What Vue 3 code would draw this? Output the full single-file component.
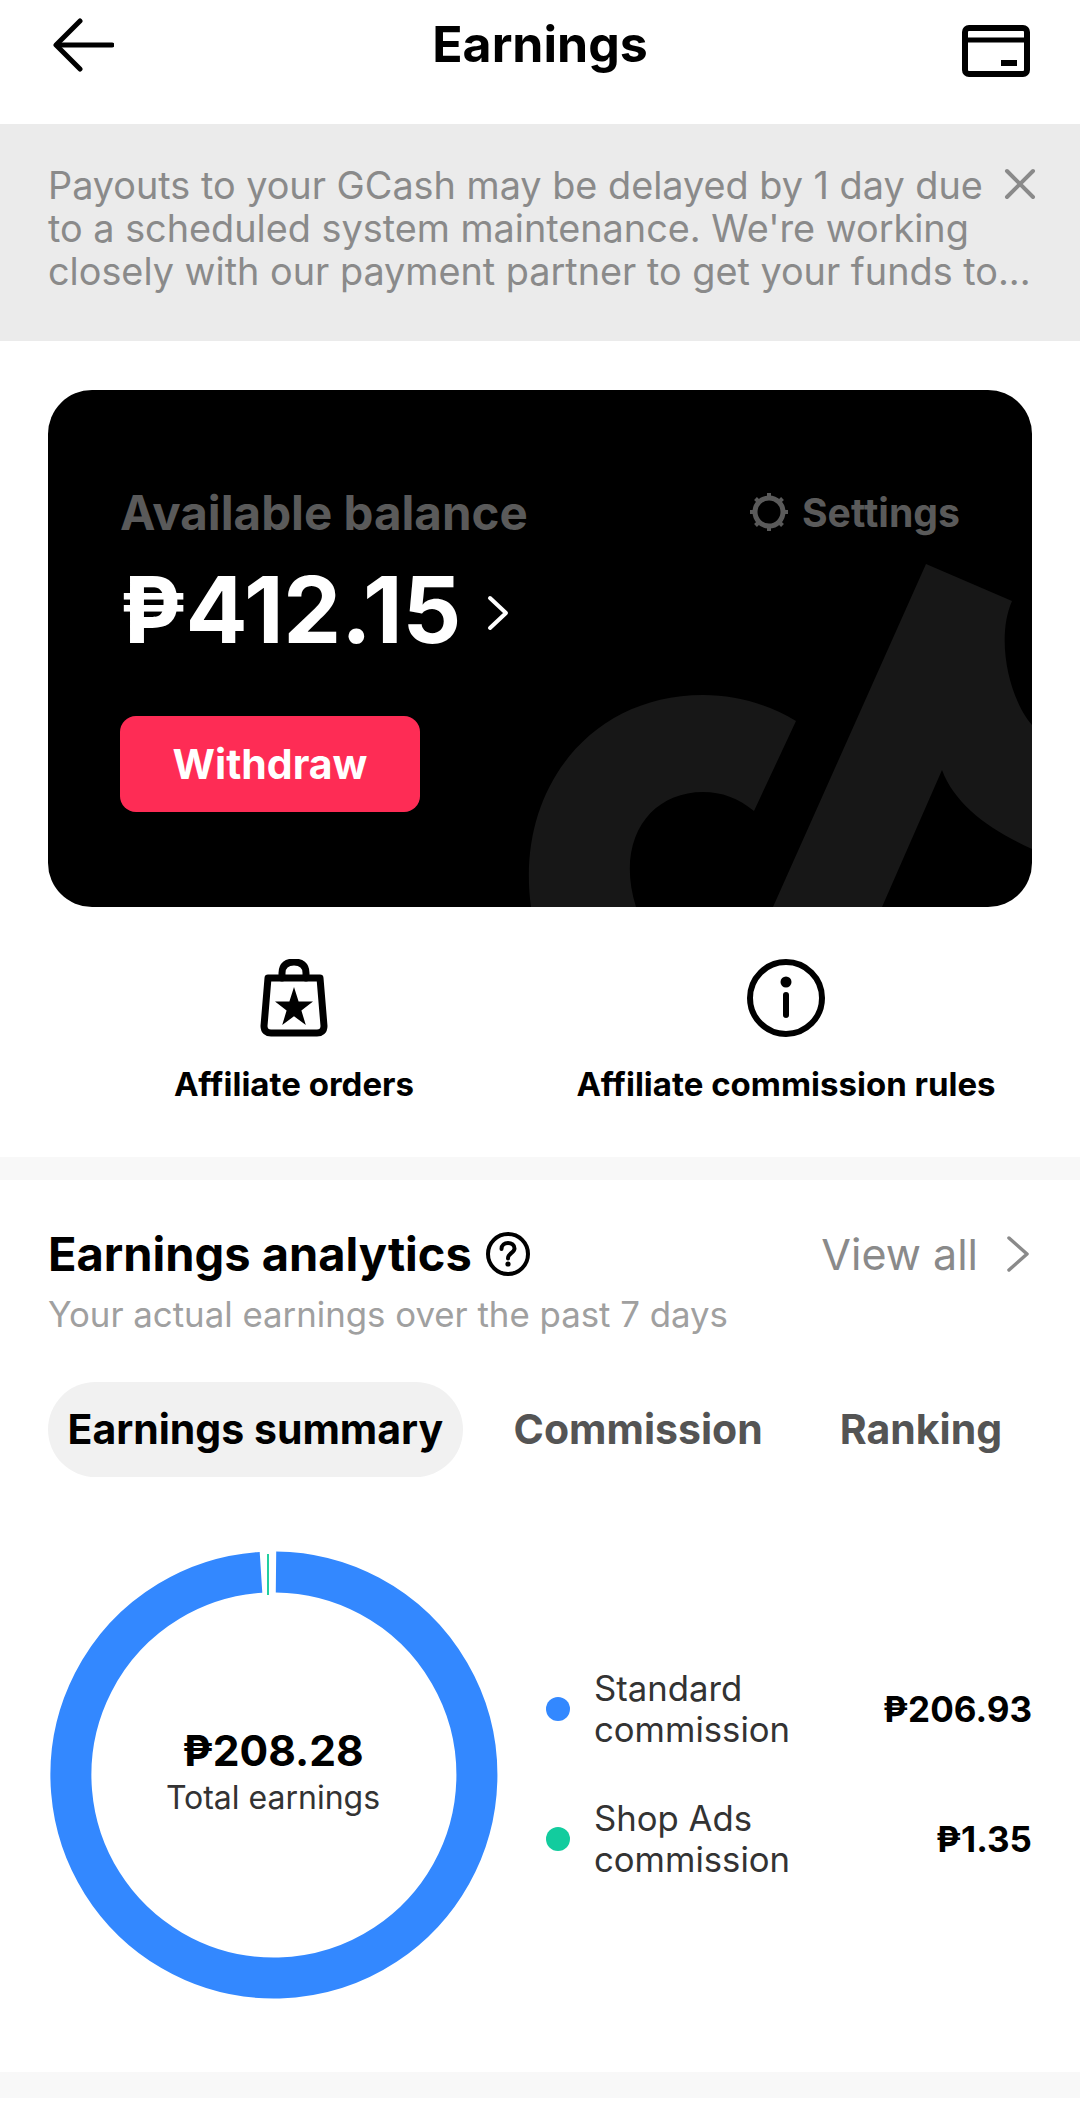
<template>
  <div class="page">
    <header class="topbar">
      <svg class="back" viewBox="0 0 62 54" fill="none" stroke="#000" stroke-width="5" stroke-linecap="round" stroke-linejoin="round">
        <path d="M28 3 L4 27 L28 51" />
        <path d="M5 27 H60" />
      </svg>
      <h1 class="title">Earnings</h1>
      <svg class="wallet" viewBox="0 0 68 52" fill="none">
        <rect x="3" y="3" width="62" height="46" rx="4" stroke="#000" stroke-width="6" />
        <path d="M3 15 H65" stroke="#000" stroke-width="5" />
        <rect x="39" y="35" width="16" height="6" fill="#000" />
      </svg>
    </header>

    <section class="notice">
      <p v-for="line in noticeLines" :key="line">{{ line }}</p>
      <svg class="notice-close" viewBox="0 0 32 32" fill="none" stroke="#8a8a8a" stroke-width="4" stroke-linecap="round">
        <path d="M3 3 L29 29 M29 3 L3 29" />
      </svg>
    </section>

    <section class="balance-wrap">
      <div class="balance-card">
        <svg class="logo" viewBox="48 390 984 517" preserveAspectRatio="none" fill="#171717">
          <path d="M531 907 C515 790 590 695 703 695 C736 695 768 704 796 721 L754 811 C738 798 722 792 703 792 C650 792 615 840 636 907 Z" />
          <path d="M926 564 L1012 601 C995 640 1010 700 1032 725 L1032 849 C990 830 955 805 942 770 L882 907 L773 907 Z" />
        </svg>
        <div class="balance-top">
          <span class="balance-label">Available balance</span>
          <span class="settings">
            <svg class="gear" viewBox="0 0 40 40" fill="none" stroke="#5a5a5a" stroke-width="5">
              <circle cx="20" cy="20" r="14" />
              <path d="M20 1 V6 M20 34 V39 M1 20 H6 M34 20 H39 M6.5 6.5 L10 10 M30 30 L33.5 33.5 M33.5 6.5 L30 10 M10 30 L6.5 33.5" stroke-width="4" />
            </svg>
            Settings
          </span>
        </div>
        <div class="amount-row">
          <span class="amount">₱412.15</span>
          <svg class="amount-chevron" viewBox="0 0 22 36" fill="none" stroke="#fff" stroke-width="4" stroke-linecap="round" stroke-linejoin="round">
            <path d="M3 3 L19 18 L3 33" />
          </svg>
        </div>
        <button class="withdraw">Withdraw</button>
      </div>

      <div class="shortcuts">
        <div class="shortcut">
          <svg class="shortcut-icon" viewBox="0 0 78 78" fill="none" stroke="#000" stroke-width="7" stroke-linejoin="round">
            <path d="M27 19 V14 C27 6 32 3 39 3 C46 3 51 6 51 14 V19" stroke-linecap="round" />
            <path d="M13 19 H65 L69 67 C69 72 66 74 62 74 H16 C12 74 9 72 9 67 Z" />
            <path fill="#000" stroke="none" d="M39 28 L43.6 42.6 H58 L46.4 51.6 L50.8 66 L39 57.2 L27.2 66 L31.6 51.6 L20 42.6 H34.4 Z" />
          </svg>
          <span>Affiliate orders</span>
        </div>
        <div class="shortcut">
          <svg class="shortcut-icon" viewBox="0 0 78 78" fill="none" stroke="#000" stroke-width="6">
            <circle cx="39" cy="39" r="36" />
            <circle cx="39" cy="23" r="5.5" fill="#000" stroke="none" />
            <path d="M39 36 V56" stroke-linecap="round" />
          </svg>
          <span>Affiliate commission rules</span>
        </div>
      </div>
    </section>

    <div class="divider"></div>

    <section class="analytics">
      <div class="analytics-head">
        <h2>Earnings analytics</h2>
        <svg class="help" viewBox="0 0 44 44" fill="none" stroke="#000" stroke-width="4">
          <circle cx="22" cy="22" r="20" />
          <path d="M15.5 17 C15.5 13 18.5 11 22 11 C25.5 11 28.5 13 28.5 16.5 C28.5 21 22 21 22 26.5" stroke-linecap="round" />
          <circle cx="22" cy="32" r="2.6" fill="#000" stroke="none" />
        </svg>
        <span class="view-all">View all</span>
        <svg class="view-chevron" viewBox="0 0 24 36" fill="none" stroke="#8a8a8a" stroke-width="3.5" stroke-linecap="round" stroke-linejoin="round">
          <path d="M3 2 L21 18 L3 34" />
        </svg>
      </div>
      <p class="analytics-sub">Your actual earnings over the past 7 days</p>

      <div class="tabs">
        <span v-for="(tab, i) in tabs" :key="tab" class="tab" :class="{ active: i === 0 }">{{ tab }}</span>
      </div>

      <div class="chart-row">
        <div class="donut">
          <svg viewBox="0 0 446 446" width="446" height="446" fill="none" stroke-width="41">
            <path d="M 226 20 A 203 203 0 1 1 211 20.4" stroke="#3388ff" />
            <path d="M 218 2 V 43" stroke="#22cfa0" stroke-width="2" />
          </svg>
          <div class="donut-center">
            <strong>₱208.28</strong>
            <span>Total earnings</span>
          </div>
        </div>
        <ul class="legend">
          <li v-for="item in legend" :key="item.amount">
            <i class="dot" :style="{ background: item.color }"></i>
            <span class="legend-name">{{ item.line1 }}<br />{{ item.line2 }}</span>
            <strong class="legend-amount">{{ item.amount }}</strong>
          </li>
        </ul>
      </div>
    </section>

    <div class="divider bottom"></div>
  </div>
</template>

<script setup>
const noticeLines = [
  'Payouts to your GCash may be delayed by 1 day due',
  "to a scheduled system maintenance. We're working",
  'closely with our payment partner to get your funds to...'
];

const tabs = ['Earnings summary', 'Commission', 'Ranking'];

const legend = [
  { color: '#3388ff', line1: 'Standard', line2: 'commission', amount: '₱206.93' },
  { color: '#12cc9e', line1: 'Shop Ads', line2: 'commission', amount: '₱1.35' }
];
</script>

<style>
html,
body {
  background: #fff;
}
</style>

<style scoped>
.page {
  width: 1080px;
  height: 2120px;
  overflow: hidden;
  background: #fff;
  color: #000;
  font-family: Inter, "Noto Sans", sans-serif;
}

.topbar {
  height: 124px;
  display: flex;
  align-items: flex-start;
  justify-content: space-between;
  padding: 18px 50px 0 52px;
  box-sizing: border-box;
}

.back {
  width: 62px;
  height: 54px;
}

.title {
  margin: 0 0 0 4px;
  font-size: 50px;
  line-height: 52px;
  font-weight: 700;
}

.wallet {
  width: 68px;
  height: 52px;
  margin-top: 7px;
}

.notice {
  position: relative;
  height: 217px;
  box-sizing: border-box;
  padding: 40px 0 0 48px;
  background: #ebebeb;
  color: #8a8a8a;
  font-size: 37.8px;
  line-height: 43px;
}

.notice p {
  margin: 0;
  white-space: nowrap;
}

.notice-close {
  position: absolute;
  top: 44px;
  right: 44px;
  width: 32px;
  height: 32px;
}

.balance-wrap {
  padding: 49px 48px 0;
  height: 816px;
  box-sizing: border-box;
}

.balance-card {
  position: relative;
  height: 517px;
  box-sizing: border-box;
  padding: 96px 72px 0;
  border-radius: 44px;
  background: #000;
  overflow: hidden;
}

.logo {
  position: absolute;
  inset: 0;
  width: 100%;
  height: 100%;
}

.balance-top,
.amount-row,
.withdraw {
  position: relative;
}

.balance-top {
  display: flex;
  justify-content: space-between;
  align-items: center;
  height: 52px;
  color: #5a5a5a;
  font-weight: 700;
}

.balance-label {
  font-size: 47.5px;
}

.settings {
  display: flex;
  align-items: center;
  gap: 13px;
  font-size: 39.2px;
}

.gear {
  width: 40px;
  height: 40px;
}

.amount-row {
  display: flex;
  align-items: center;
  gap: 26px;
  margin-top: 26px;
  height: 92px;
  color: #fff;
}

.amount {
  font-size: 92px;
  line-height: 92px;
  font-weight: 700;
  letter-spacing: -0.3px;
}

.amount-chevron {
  width: 22px;
  height: 36px;
  margin-top: 6px;
}

.withdraw {
  display: block;
  margin-top: 60px;
  width: 300px;
  height: 96px;
  border: 0;
  border-radius: 16px;
  background: #fe2c55;
  color: #fff;
  font-family: inherit;
  font-size: 41px;
  font-weight: 700;
}

.shortcuts {
  display: flex;
  margin-top: 52px;
}

.shortcut {
  width: 492px;
  display: flex;
  flex-direction: column;
  align-items: center;
  gap: 28px;
  font-size: 33px;
  line-height: 38px;
  font-weight: 700;
}

.shortcut-icon {
  width: 78px;
  height: 78px;
}

.divider {
  height: 23px;
  background: #f8f8f8;
}

.analytics {
  height: 892px;
  box-sizing: border-box;
  padding: 48px 48px 0;
}

.analytics-head {
  display: flex;
  align-items: center;
  height: 52px;
}

.analytics-head h2 {
  margin: 0;
  font-size: 47px;
  line-height: 52px;
  font-weight: 700;
}

.help {
  width: 44px;
  height: 44px;
  margin-left: 14px;
}

.view-all {
  margin-left: auto;
  font-size: 43px;
  color: #8a8a8a;
}

.view-chevron {
  width: 24px;
  height: 36px;
  margin-left: 28px;
  margin-right: 2px;
}

.analytics-sub {
  margin: 12px 0 0;
  font-size: 34.8px;
  line-height: 44px;
  color: #a0a0a0;
}

.tabs {
  display: flex;
  align-items: center;
  gap: 25px;
  margin-top: 46px;
  height: 95px;
  font-size: 41px;
  font-weight: 700;
  color: #545454;
}

.tab {
  padding: 0 26px;
  line-height: 95px;
  white-space: nowrap;
}

.tab.active {
  padding: 0 19.5px;
  border-radius: 48px;
  background: #f1f1f1;
  color: #000;
}

.chart-row {
  display: flex;
  margin-top: 75px;
}

.donut {
  position: relative;
  flex: none;
  width: 446px;
  height: 446px;
  margin-left: 2px;
}

.donut svg {
  display: block;
  overflow: visible;
}

.donut-center {
  position: absolute;
  inset: 0;
  display: flex;
  flex-direction: column;
  align-items: center;
  padding-top: 174px;
  box-sizing: border-box;
}

.donut-center strong {
  font-size: 42.5px;
  line-height: 50px;
  font-weight: 700;
}

.donut-center span {
  font-size: 32px;
  line-height: 44px;
  color: #333;
}

.legend {
  flex: 1;
  list-style: none;
  margin: 0;
  padding: 0 0 0 50px;
}

.legend li {
  display: flex;
  align-items: center;
  height: 84px;
  margin-top: 115px;
}

.legend li + li {
  margin-top: 46px;
}

.dot {
  flex: none;
  width: 24px;
  height: 24px;
  border-radius: 50%;
  margin-right: 24px;
}

.legend-name {
  font-size: 34.7px;
  line-height: 41px;
  color: #333;
}

.legend-amount {
  margin-left: auto;
  font-size: 35px;
  font-weight: 700;
}

.divider.bottom {
  height: 26px;
}
</style>
